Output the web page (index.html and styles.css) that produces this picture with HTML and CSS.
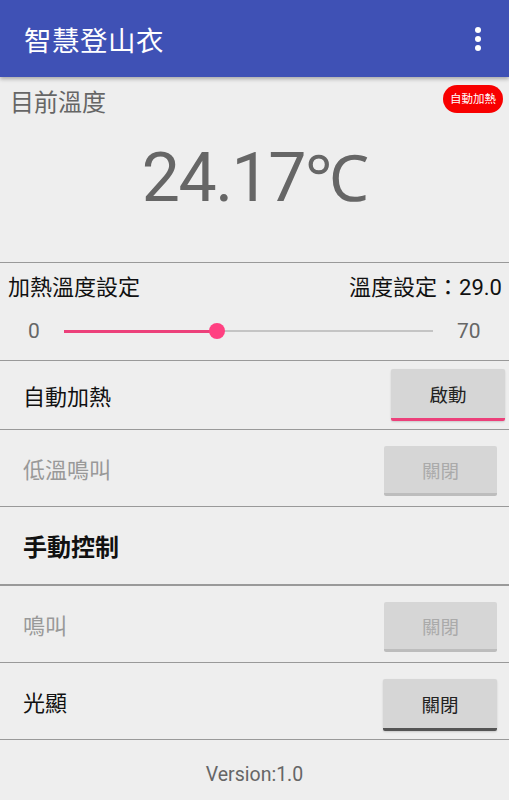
FILE: index.html
```html
<!DOCTYPE html>
<html lang="zh-Hant">
<head>
    <meta charset="UTF-8">
    <meta name="viewport" content="width=device-width, initial-scale=1.0">
    <title>智慧登山衣</title>
    <link rel="stylesheet" href="styles.css">
</head>
<body>
    <!-- App bar -->
    <header class="app-bar">
        <h1>智慧登山衣</h1>
        <svg class="menu-icon" width="10" height="26" viewBox="0 0 10 26">
            <circle cx="5" cy="4" r="3" fill="#fff"/>
            <circle cx="5" cy="13" r="3" fill="#fff"/>
            <circle cx="5" cy="22" r="3" fill="#fff"/>
        </svg>
    </header>

    <main>
        <section class="current">
            <div class="current-head">
                <span class="current-label">目前溫度</span>
                <span class="badge">自動加熱</span>
            </div>
            <div class="temp">24.17<span class="unit">℃</span></div>
        </section>

        <section class="setting">
            <div class="setting-head">
                <span>加熱溫度設定</span>
                <span>溫度設定：29.0</span>
            </div>
            <div class="slider-row">
                <span class="slider-min">0</span>
                <div class="slider">
                    <div class="slider-fill" style="width: 41.4%"></div>
                    <div class="slider-thumb" style="left: 41.4%"></div>
                </div>
                <span class="slider-max">70</span>
            </div>
        </section>

        <div class="row row-auto">
            <span class="row-label">自動加熱</span>
            <button class="btn btn-on">啟動</button>
        </div>

        <div class="row">
            <span class="row-label disabled">低溫鳴叫</span>
            <button class="btn btn-disabled" disabled>關閉</button>
        </div>

        <div class="row section-title">
            <span>手動控制</span>
        </div>

        <div class="row">
            <span class="row-label disabled">鳴叫</span>
            <button class="btn btn-disabled" disabled>關閉</button>
        </div>

        <div class="row">
            <span class="row-label">光顯</span>
            <button class="btn btn-off">關閉</button>
        </div>
    </main>

    <footer>
        <p>Version:1.0</p>
    </footer>
</body>
</html>
```

FILE: styles.css
```css
/* Page */
body {
    font-family: Roboto, "Noto Sans CJK TC", sans-serif;
    margin: 0;
    padding: 0;
    background-color: #eeeeee;
    color: #111;
}

/* App bar */
.app-bar {
    height: 77px;
    background-color: #3f51b5;
    color: white;
    display: flex;
    align-items: center;
    justify-content: space-between;
    padding: 0 26px 0 24px;
    box-shadow: 0 2px 4px rgba(0, 0, 0, 0.3);
    position: relative;
}

.app-bar h1 {
    margin: 0;
    font-size: 27.5px;
    font-weight: normal;
    letter-spacing: 0.5px;
}

/* Current temperature */
.current {
    height: 185px;
    border-bottom: 1px solid #999;
}

.current-head {
    display: flex;
    justify-content: space-between;
    align-items: flex-start;
    padding: 8px 6px 0 10px;
}

.current-label {
    font-size: 24px;
    color: #666;
    line-height: 30px;
    margin-top: 3px;
}

.badge {
    background-color: #f80000;
    color: white;
    font-size: 11.5px;
    height: 28px;
    line-height: 28px;
    padding: 0 7px;
    border-radius: 14px;
}

.temp {
    text-align: center;
    font-size: 68px;
    letter-spacing: -1.5px;
    color: #666;
    margin-top: 19px;
    line-height: 80px;
}

.unit {
    font-family: "Noto Sans", "DejaVu Sans", sans-serif;
    font-size: 64px;
}

/* Heat setting */
.setting {
    height: 97px;
    border-bottom: 1px solid #999;
}

.setting-head {
    display: flex;
    justify-content: space-between;
    padding: 10px 7px 0 8px;
    font-size: 22px;
    line-height: 30px;
}

.slider-row {
    display: flex;
    align-items: center;
    height: 34px;
    margin-top: 11px;
    font-size: 21px;
    color: #666;
}

.slider-min {
    width: 64px;
    padding-left: 28px;
    box-sizing: border-box;
}

.slider-max {
    width: 76px;
    padding-left: 24px;
    box-sizing: border-box;
}

.slider {
    flex: 1;
    height: 2px;
    background-color: #c4c4c4;
    position: relative;
}

.slider-fill {
    height: 3px;
    margin-top: -0.5px;
    background-color: #ec407a;
}

.slider-thumb {
    position: absolute;
    top: -7px;
    width: 16px;
    height: 16px;
    margin-left: -8px;
    border-radius: 50%;
    background-color: #ff4081;
}

/* Rows */
.row {
    height: 76px;
    display: flex;
    align-items: center;
    justify-content: space-between;
    padding: 0 12px 0 23px;
    border-bottom: 1px solid #999;
}

.row .btn {
    align-self: flex-start;
    margin-top: 16px;
}

.row-auto {
    height: 68px;
    padding-right: 4px;
}

.row-auto .btn {
    margin-top: 8px;
}

.row-label {
    font-size: 22px;
    color: #111;
}

.row-label.disabled {
    color: #999;
}

.section-title {
    height: 77px;
    border-bottom: 2px solid #999;
    font-size: 24px;
    font-weight: bold;
}

/* Buttons */
.btn {
    width: 113px;
    height: 50px;
    border: none;
    border-radius: 2px;
    background-color: #d6d6d6;
    font-family: Roboto, "Noto Sans CJK TC", sans-serif;
    font-size: 18.5px;
    color: #222;
    border-bottom: 3px solid #bdbdbd;
    box-shadow: 0 1px 2px rgba(0, 0, 0, 0.15);
}

.btn-on {
    width: 114px;
    height: 52px;
    border-bottom-color: #ec407a;
}

.btn-disabled {
    color: #aaa;
    box-shadow: none;
}

.btn-off {
    width: 114px;
    height: 52px;
    border-bottom-color: #555;
}

/* Footer */
footer {
    text-align: center;
    color: #666;
    font-size: 19.5px;
}

footer p {
    margin: 23px 0 0;
}
```
